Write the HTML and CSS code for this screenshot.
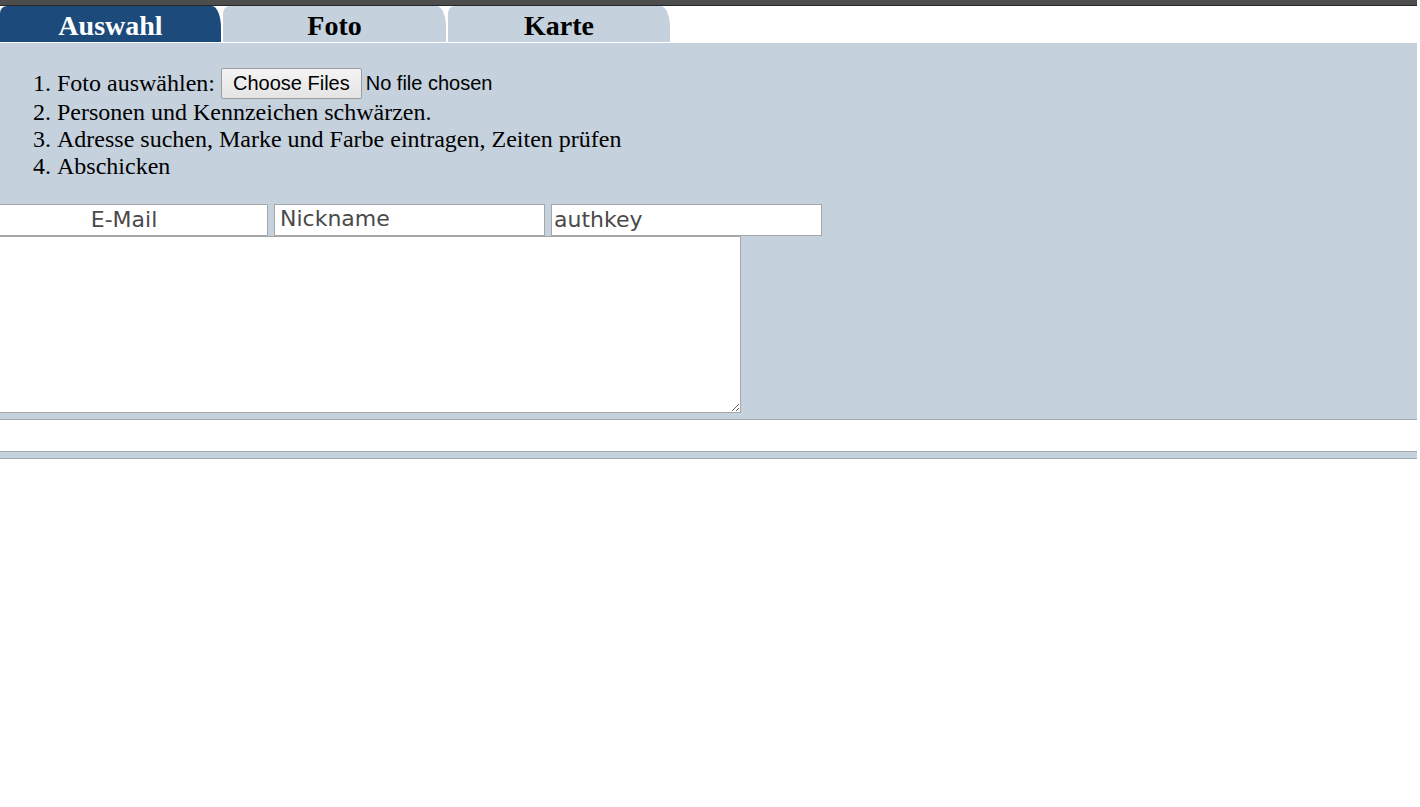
FILE: index.html
```html
<!DOCTYPE html>
<html lang="de">
<head>
<meta charset="utf-8">
<title>Auswahl</title>
<link rel="stylesheet" href="styles.css">
</head>
<body>
<div class="topbar"></div>
<nav class="tabs">
  <div class="tab tab-active tab-w1">Auswahl</div>
  <div class="tab tab-w2">Foto</div>
  <div class="tab tab-w3">Karte</div>
</nav>
<section class="panel">
  <ol class="steps">
    <li>Foto auswählen: <input class="file" type="file" multiple></li>
    <li>Personen und Kennzeichen schwärzen.</li>
    <li>Adresse suchen, Marke und Farbe eintragen, Zeiten prüfen</li>
    <li>Abschicken</li>
  </ol>
  <div class="fields">
    <input class="field field-email" type="text" placeholder="E-Mail">
    <input class="field field-nick" type="text" placeholder="Nickname">
    <input class="field field-key" type="text" placeholder="authkey">
  </div>
  <textarea class="notes"></textarea>
</section>
<div class="spacer"></div>
<div class="strip"></div>
</body>
</html>
```

FILE: styles.css
```css
html, body {
  margin: 0;
  padding: 0;
  background: #ffffff;
}
body {
  width: 1417px;
  font-family: "Liberation Serif", "Times New Roman", serif;
  color: #000;
  overflow-x: hidden;
}
.topbar {
  height: 5px;
  background: #4d4d4d;
  border-bottom: 1px solid #262626;
}
.tabs {
  display: flex;
  gap: 2px;
  height: 36px;
  margin-bottom: 1px;
}
.tab {
  height: 36px;
  line-height: 39px;
  text-align: center;
  font-weight: bold;
  font-size: 28px;
  background: #c5d1dd;
  color: #000;
  border-radius: 7px 9px 0 0 / 7px 22px 0 0;
}
.tab-w1 { width: 221px; }
.tab-w2 { width: 223px; }
.tab-w3 { width: 222px; }
.tab-active {
  background: #1b4a7b;
  color: #fff;
}
.panel {
  background: #c5d1dd;
  border-bottom: 1px solid #a3a9b0;
  padding: 0 0 6px 0;
}
.steps {
  margin: 0;
  padding: 24px 0 24px 57px;
  font-size: 24px;
  line-height: 27px;
}
.steps li:first-child {
  line-height: 32px;
  height: 32px;
}
.file {
  font-family: "Liberation Sans", Arial, sans-serif;
  font-size: 20px;
  vertical-align: baseline;
  position: relative;
  top: -1px;
}
.file::file-selector-button {
  font-family: "Liberation Sans", Arial, sans-serif;
  font-size: 20px;
  padding: 3px 11px;
  margin-right: 4px;
  border: 1px solid #9c9c9c;
  border-radius: 2px;
  background: linear-gradient(#f4f4f4, #e4e4e4);
  color: #000;
}
.fields {
  display: flex;
  gap: 6px;
  margin-left: -20px;
}
.field {
  box-sizing: border-box;
  width: 271px;
  height: 32px;
  margin: 0;
  padding: 1px 2px 3px;
  border: 1px solid #a6a6a6;
  background: #fff;
  font-family: "DejaVu Sans", sans-serif;
  font-size: 22px;
  color: #444;
}
.field::placeholder {
  color: #4a4a4a;
}
.field-email {
  width: 288px;
  text-align: center;
}
.field-nick {
  padding: 0 5px 4px;
}
.notes {
  display: block;
  box-sizing: border-box;
  width: 744px;
  height: 177px;
  margin: 0 0 0 -3px;
  border: 1px solid #a6a6a6;
  background: #fff;
}
.spacer {
  height: 31px;
}
.strip {
  height: 6px;
  background: #c5d1dd;
  border-top: 1px solid #a3a9b0;
  border-bottom: 1px solid #a3a9b0;
}
```
